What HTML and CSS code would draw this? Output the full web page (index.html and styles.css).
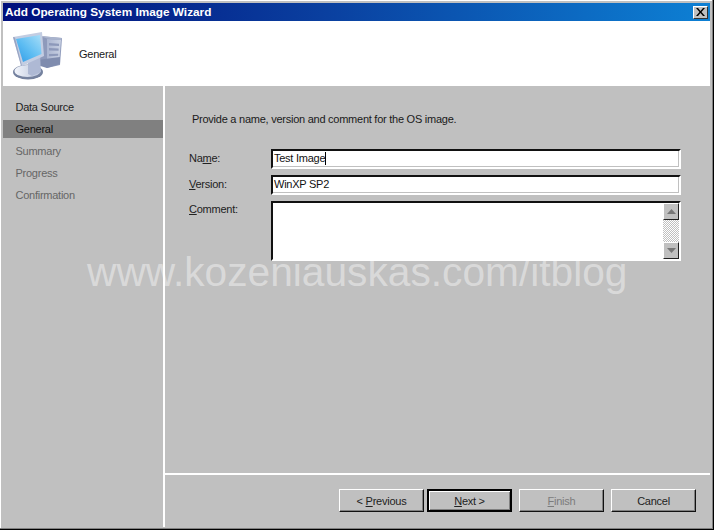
FILE: index.html
```html
<!DOCTYPE html>
<html lang="en">
<head>
<meta charset="utf-8">
<title>Add Operating System Image Wizard</title>
<link rel="stylesheet" href="styles.css">
</head>
<body>
<div class="window">
  <div class="frame">
    <div class="titlebar">
      <span class="title">Add Operating System Image Wizard</span>
      <span class="close"><svg width="9" height="8" viewBox="0 0 9 8"><path d="M0 0h2l2.500 3L7 0h2L5.500 4 9 8H7L4.500 5 2 8H0l3.500-4z" fill="#000"/></svg></span>
    </div>
    <div class="header">
      <svg class="computer" width="52" height="50" viewBox="0 0 52 50">
        <defs>
          <linearGradient id="scr" x1="1" y1="0" x2="0" y2="1"><stop offset="0" stop-color="#a8def8"/><stop offset=".55" stop-color="#5cbcf2"/><stop offset="1" stop-color="#2f9ae6"/></linearGradient>
          <linearGradient id="cas" x1="0" y1="0" x2="1" y2="0"><stop offset="0" stop-color="#aab5d0"/><stop offset="1" stop-color="#c8d0e2"/></linearGradient>
          <linearGradient id="bas" x1="0" y1="0" x2="1" y2="0"><stop offset="0" stop-color="#f2f5fb"/><stop offset="1" stop-color="#b9c3da"/></linearGradient>
        </defs>
        <path d="M28 6l22 2-2 27-13 3-9-6z" fill="#8e9abb"/>
        <path d="M28 6l22 2-1 2-14-1.500z" fill="#aab4cd"/>
        <path d="M35 9l14 1-1.500 18L35 30z" fill="url(#cas)"/>
        <path d="M37 13l10 .8v2.200l-10-.6zM37 18l9.600.6v2.200l-9.600-.4zM37 24l9.200-.2v2l-9.200.4z" fill="#8d99ba"/>
        <path d="M25 30l23-3v7l-13 4-10-3z" fill="#7f8cae"/>
        <ellipse cx="16" cy="42" rx="15" ry="7.500" fill="#75829f"/>
        <ellipse cx="15.500" cy="41" rx="13" ry="6" fill="url(#bas)"/>
        <path d="M16 28l12-3 1 17-9 4-4-2z" fill="#aeb9d4"/>
        <path d="M1 7L30 2l2 24-22 10-1-.5z" fill="#c3cde2"/>
        <path d="M1 7l2 .5 7 28.500-1-.5z" fill="#98a5c4"/>
        <path d="M4 9L28 5l1.500 19L11 32z" fill="url(#scr)"/>
      </svg>
      <span class="step-title">General</span>
    </div>
    <div class="main">
      <nav class="sidebar">
        <div class="nav-item">Data Source</div>
        <div class="nav-item active">General</div>
        <div class="nav-item muted">Summary</div>
        <div class="nav-item muted">Progress</div>
        <div class="nav-item muted">Confirmation</div>
      </nav>
      <div class="content">
        <div class="page">
          <p class="intro">Provide a name, version and comment for the OS image.</p>
          <div class="form">
            <label class="lbl">Na<u>m</u>e:</label>
            <div class="field"><span>Test Image</span><i class="caret"></i></div>
            <label class="lbl"><u>V</u>ersion:</label>
            <div class="field"><span>WinXP SP2</span></div>
            <label class="lbl lbl-top"><u>C</u>omment:</label>
            <div class="field area">
              <div class="scroll">
                <span class="arrow"><svg width="9" height="5" viewBox="0 0 9 5"><path d="M4.500 0L9 5H0z" fill="#777"/></svg></span>
                <span class="track"></span>
                <span class="arrow"><svg width="9" height="5" viewBox="0 0 9 5"><path d="M0 0h9L4.500 5z" fill="#777"/></svg></span>
              </div>
            </div>
          </div>
        </div>
        <div class="buttons">
          <button class="btn">&lt; <u>P</u>revious</button>
          <button class="btn default"><u>N</u>ext &gt;</button>
          <button class="btn disabled"><u>F</u>inish</button>
          <button class="btn cancel">Cancel</button>
        </div>
      </div>
    </div>
  </div>
  <div class="watermark">www.kozeniauskas.com/itblog</div>
</div>
</body>
</html>
```
FILE: styles.css
```css
* { box-sizing: border-box; }
html, body { margin: 0; padding: 0; }
body { width: 714px; height: 530px; overflow: hidden; background: #c0c0c0; font-family: "Liberation Sans", Arial, sans-serif; font-size: 11px; letter-spacing: -0.25px; color: #111; }
.window { position: relative; width: 714px; height: 530px; background: #c0c0c0; border-right: 1px solid #000; border-bottom: 1px solid #000; }
.frame { display: flex; flex-direction: column; width: 713px; height: 529px; padding: 3px 2px 1px 3px; border-right: 1px solid #808080; border-bottom: 1px solid #808080; box-shadow: inset 1px 1px 0 #fff; }
.titlebar { flex: none; display: flex; align-items: center; justify-content: space-between; height: 18px; padding: 0 2px; background: linear-gradient(90deg, #000f7c 0%, #0a3f9f 45%, #0d80d4 100%); }
.title { color: #fff; font-weight: 700; font-size: 11.800px; letter-spacing: 0; }
.close { display: flex; align-items: center; justify-content: center; width: 15px; height: 13px; background: #c0c0c0; border: 1px solid; border-color: #fff #333 #333 #fff; }
.header { flex: none; display: flex; align-items: center; height: 65px; background: #fff; padding: 3px 0 0 9px; }
.computer { flex: none; }
.step-title { margin-left: 15px; margin-top: -3px; color: #1a1a1a; }
.main { flex: 1; display: flex; min-height: 0; }
.sidebar { flex: none; width: 162px; padding-top: 11px; background: #c0c0c0; border-right: 2px solid #fff; }
.nav-item { height: 22px; padding-left: 12.500px; line-height: 21px; color: #222; }
.nav-item.active { height: 18px; line-height: 19px; margin: 1px 0 3px; background: #808080; color: #111; }
.nav-item.muted { color: #666; }
.content { flex: 1; display: flex; flex-direction: column; min-width: 0; }
.page { flex: none; height: 389px; padding: 26px 0 0 24px; border-bottom: 2px solid #fff; }
.intro { margin: 0 0 23px 3px; line-height: 14px; color: #1a1a1a; }
.form { display: grid; grid-template-columns: 82px 410px; row-gap: 6px; }
.lbl { padding-top: 2px; color: #222; line-height: 14px; }
.lbl-top { padding-top: 1px; }
.field { display: flex; align-items: center; height: 20px; padding: 0 1px 2px; background: #fff; border: 2px solid; border-color: #111 #fff #fff #111; box-shadow: inset -1px -1px 0 #c0c0c0; color: #111; line-height: 14px; }
.caret { display: inline-block; width: 1px; height: 13px; background: #000; }
.field.area { height: 60px; align-items: stretch; justify-content: flex-end; padding: 0; box-shadow: none; }
.scroll { display: flex; flex-direction: column; width: 16px; }
.arrow { flex: none; display: flex; align-items: center; justify-content: center; height: 17px; background: #c0c0c0; border: 1px solid; border-color: #fff #222 #222 #fff; }
.track { flex: 1; background: repeating-conic-gradient(#fff 0 25%, #c0c0c0 0 50%) 0 0 / 2px 2px; }
.buttons { flex: 1; display: flex; justify-content: flex-end; align-items: flex-start; padding: 14px 14px 0 0; }
.btn { width: 85px; height: 23px; padding: 0; background: #c0c0c0; border: 1px solid; border-color: #fff #111 #111 #fff; box-shadow: inset -1px -1px 0 #808080; font: 11px "Liberation Sans", Arial, sans-serif; letter-spacing: -0.25px; color: #222; }
.btn.default { margin-left: 3px; border: 2px solid #000; box-shadow: inset 1px 1px 0 #fff, inset -1px -1px 0 #808080; }
.btn.disabled { margin-left: 7px; color: #7c7c7c; }
.btn.cancel { margin-left: 7px; }
.watermark { position: absolute; left: 87px; top: 249px; font-size: 40.700px; line-height: 46px; letter-spacing: 0; color: rgba(255, 255, 255, 0.42); white-space: nowrap; pointer-events: none; }
```
